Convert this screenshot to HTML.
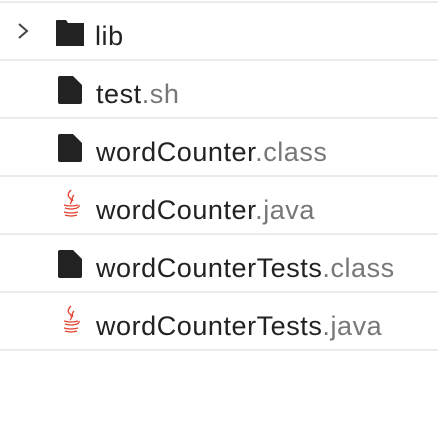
<!DOCTYPE html><html><head><style>
body{margin:0;width:438px;height:424px;background:#fff;font-family:"Liberation Sans",sans-serif;overflow:hidden;position:relative}
.sep{position:absolute;left:0;width:438px;height:2px;background:#ebebeb}
.row{position:absolute;left:0;height:58px;width:438px}
.t{position:absolute;left:96px;top:18px;font-size:27px;color:#222;white-space:nowrap;letter-spacing:0.55px}
.t span{color:#777}
.ic{position:absolute;left:57px;top:16px}
</style></head><body>
<div class="sep" style="top:1px"></div>
<div class="sep" style="top:59px"></div>
<div class="sep" style="top:117px"></div>
<div class="sep" style="top:175px"></div>
<div class="sep" style="top:233px"></div>
<div class="sep" style="top:291px"></div>
<div class="sep" style="top:349px"></div>

<div class="row" style="top:3px">
<svg style="position:absolute;left:16px;top:20px" width="14" height="16"><path d="M3 1 L11 8 L3 15" stroke="#444" stroke-width="2" fill="none"/></svg>
<svg class="ic" style="top:17px;left:56px" width="29" height="26"><path d="M0 1 Q0 0 1 0 H10 L12 3 H28 V26 H0Z" fill="#222"/></svg>
<div class="t" style="left:95px">lib</div></div>

<div class="row" style="top:61px">
<svg class="ic" style="left:58px;top:15px" width="24" height="28"><path d="M2 0 H15 L24 9 V26 Q24 28 22 28 H2 Q0 28 0 26 V2 Q0 0 2 0Z" fill="#222"/></svg>
<div class="t">test<span>.sh</span></div></div>

<div class="row" style="top:119px">
<svg class="ic" style="left:58px;top:15px" width="24" height="28"><path d="M2 0 H15 L24 9 V26 Q24 28 22 28 H2 Q0 28 0 26 V2 Q0 0 2 0Z" fill="#222"/></svg>
<div class="t">wordCounter<span>.class</span></div></div>

<div class="row" style="top:177px">
<svg class="ic" style="left:60px;top:12px" width="22" height="28" fill="none" stroke="#e2412e" stroke-width="1.3"><path d="M11 1 Q6 6 10 9 Q13 12 10 15"/><path d="M14 6 Q11 9 13 12"/><path d="M4 16 Q11 18 18 16"/><path d="M5 19 Q11 21 17 19 Q20 17 19 16"/><path d="M4 23 Q11 25 18 23"/><path d="M5 26 Q11 28 17 26"/></svg>
<div class="t">wordCounter<span>.java</span></div></div>

<div class="row" style="top:235px">
<svg class="ic" style="left:58px;top:15px" width="24" height="28"><path d="M2 0 H15 L24 9 V26 Q24 28 22 28 H2 Q0 28 0 26 V2 Q0 0 2 0Z" fill="#222"/></svg>
<div class="t">wordCounterTests<span>.class</span></div></div>

<div class="row" style="top:293px">
<svg class="ic" style="left:60px;top:12px" width="22" height="28" fill="none" stroke="#e2412e" stroke-width="1.3"><path d="M11 1 Q6 6 10 9 Q13 12 10 15"/><path d="M14 6 Q11 9 13 12"/><path d="M4 16 Q11 18 18 16"/><path d="M5 19 Q11 21 17 19 Q20 17 19 16"/><path d="M4 23 Q11 25 18 23"/><path d="M5 26 Q11 28 17 26"/></svg>
<div class="t">wordCounterTests<span>.java</span></div></div>
</body></html>
